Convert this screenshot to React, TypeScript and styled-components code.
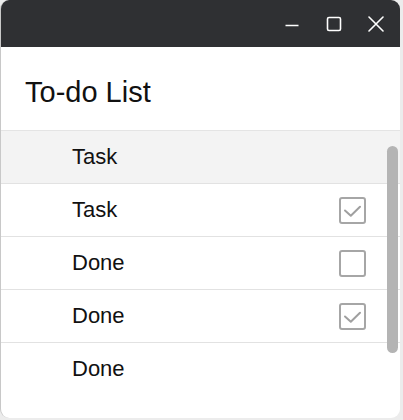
import * as React from 'react';
import styled, { createGlobalStyle } from 'styled-components';

const GlobalStyle = createGlobalStyle`
  html, body {
    margin: 0;
    padding: 0;
    background: #ececec;
    font-family: "Liberation Sans", Arial, sans-serif;
  }
`;

const Window = styled.div`
  width: 399px;
  height: 418px;
  background: #ffffff;
  border-left: 1px solid #c8c8c8;
  border-radius: 9px;
  overflow: hidden;
  display: flex;
  flex-direction: column;
`;

const TitleBar = styled.div`
  height: 47px;
  background: #2f3033;
  display: flex;
  align-items: center;
  justify-content: flex-end;
  padding-right: 16px;
  gap: 26px;
  flex-shrink: 0;
`;

const WinButton = styled.button`
  width: 16px;
  height: 16px;
  padding: 0;
  border: none;
  background: transparent;
  display: flex;
  align-items: center;
  justify-content: center;
  color: #ffffff;
`;

const Header = styled.div`
  height: 84px;
  border-bottom: 1px solid #e4e4e4;
  display: flex;
  align-items: center;
  padding-left: 24px;
  padding-top: 8px;
  box-sizing: border-box;
  font-size: 29px;
  color: #111111;
  flex-shrink: 0;
`;

const ListArea = styled.div`
  position: relative;
  flex: 1;
  overflow: hidden;
`;

const Row = styled.div<{ $hi?: boolean; $last?: boolean }>`
  height: 53px;
  border-bottom: 1px solid ${(p) => (p.$last ? 'transparent' : '#e2e2e2')};
  background: ${(p) => (p.$hi ? '#f3f3f3' : '#ffffff')};
  display: flex;
  align-items: center;
  padding-left: 71px;
  padding-right: 34px;
  box-sizing: border-box;
  font-size: 22px;
  color: #111111;
`;

const Label = styled.span`
  flex: 1;
`;

const Box = styled.div`
  width: 27px;
  height: 27px;
  box-sizing: border-box;
  border: 2px solid #a6a6a6;
  border-radius: 3px;
  display: flex;
  align-items: center;
  justify-content: center;
`;

const ScrollThumb = styled.div`
  position: absolute;
  left: 386px;
  top: 15px;
  width: 11px;
  height: 207px;
  border-radius: 6px;
  background: #b4b4b4;
`;

type Item = { text: string; box: 'none' | 'on' | 'off'; hi?: boolean };

const items: Item[] = [
  { text: 'Task', box: 'none', hi: true },
  { text: 'Task', box: 'on' },
  { text: 'Done', box: 'off' },
  { text: 'Done', box: 'on' },
  { text: 'Done', box: 'none' },
];

const Check = () => (
  <svg width="23" height="23" viewBox="0 0 23 23" fill="none">
    <polyline points="4,11.5 9.8,16.8 19,7.8" stroke="#a0a0a0" strokeWidth="2" strokeLinecap="round" strokeLinejoin="round" />
  </svg>
);

export default function App() {
  return (
    <>
      <GlobalStyle />
      <Window>
        <TitleBar>
          <WinButton aria-label="minimize">
            <svg width="14" height="16" viewBox="0 0 14 16">
              <line x1="0.5" y1="9.5" x2="13.5" y2="9.5" stroke="#fff" strokeWidth="1.6" />
            </svg>
          </WinButton>
          <WinButton aria-label="maximize">
            <svg width="16" height="16" viewBox="0 0 16 16">
              <rect x="1.5" y="1.5" width="13" height="13" rx="1.5" stroke="#fff" strokeWidth="1.6" fill="none" />
            </svg>
          </WinButton>
          <WinButton aria-label="close">
            <svg width="16" height="16" viewBox="0 0 16 16">
              <path d="M1 1 L15 15 M15 1 L1 15" stroke="#fff" strokeWidth="1.6" strokeLinecap="round" />
            </svg>
          </WinButton>
        </TitleBar>
        <Header>To-do List</Header>
        <ListArea>
          {items.map((it, i) => (
            <Row key={i} $hi={it.hi} $last={i === items.length - 1}>
              <Label>{it.text}</Label>
              {it.box !== 'none' && <Box>{it.box === 'on' && <Check />}</Box>}
            </Row>
          ))}
          <ScrollThumb />
        </ListArea>
      </Window>
    </>
  );
}
